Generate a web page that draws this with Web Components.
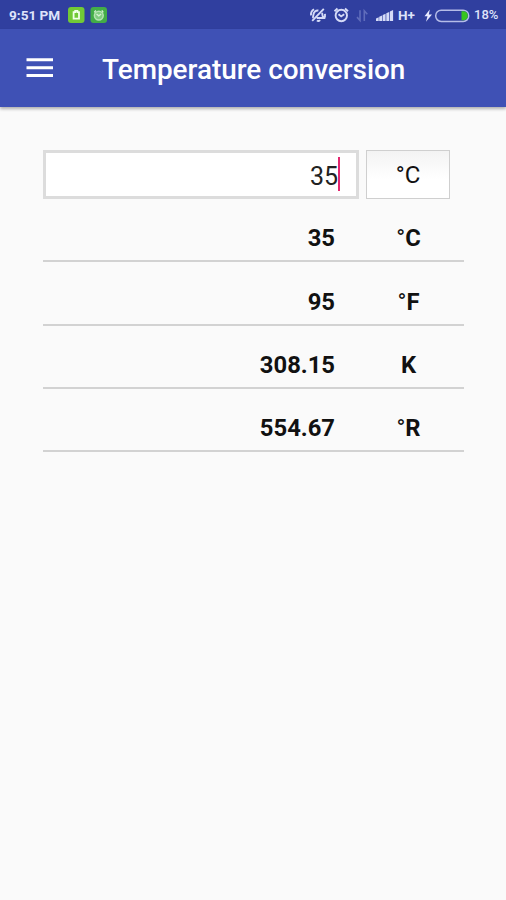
<!DOCTYPE html>
<html lang="en">
<head>
<meta charset="utf-8">
<title>Temperature conversion</title>
<style>
    body {
        margin: 0;
        background: #fafafa;
        font-family: Roboto, sans-serif;
    }
</style>
</head>
<body>
<converter-app></converter-app>

<script>
class StatusBar extends HTMLElement {
    constructor(){
        super();
        this.shadowDOM = this.attachShadow({mode:"open"});
    }

    connectedCallback(){
        this.render();
    }

    render() {
        this.shadowDOM.innerHTML = `
        <style>
        :host {
            display: flex;
            align-items: center;
            justify-content: space-between;
            box-sizing: border-box;
            height: 29px;
            padding: 1px 8px 0 9px;
            background: #303f9f;
            color: #dfe3fa;
            font-size: 14px;
            font-weight: 700;
            line-height: 16px;
        }
        .side {
            display: flex;
            align-items: center;
        }
        svg {
            display: block;
        }
        .time {
            width: 59px;
            font-size: 13.6px;
            white-space: nowrap;
        }
        .net {
            width: 25px;
            font-size: 13.5px;
        }
        .level {
            font-size: 13px;
            font-weight: 500;
            width: 24px;
            white-space: nowrap;
        }
        </style>
        <div class="side">
            <span class="time">9:51 PM</span>
            <svg width="40" height="18" viewBox="0 0 40 18">
                <rect x="0" y="1" width="16.5" height="16" rx="3" fill="#72c936"/>
                <path d="M5.6 6.2h1.6V4.8h2.2v1.4H11v6.4H5.6z" fill="none" stroke="#f1ffe8" stroke-width="1.8"/>
                <rect x="22.5" y="1" width="16.5" height="16" rx="3" fill="#43ad48"/>
                <circle cx="30.8" cy="9.6" r="4.4" fill="#80cd80" stroke="#b5e5b2" stroke-width="1.5"/>
                <path d="M26.3 6.3l1.5-2M35.3 6.3l-1.5-2M28.5 8l2.3 1.8L33.1 8" fill="none" stroke="#d5f2d1" stroke-width="1.3"/>
            </svg>
        </div>
        <div class="side">
            <svg width="89" height="18" viewBox="309 5 89 18" fill="none" stroke="#d5dbf7">
                <path d="M313.2 17c-.5-1 .1-2 .2-3.2.2-2.8 2.3-4.6 5-4.3M322 11.8c.7 1.8.1 3.7 1.5 5.2h-6.8M317 19.4c.9.9 2.4.7 3-.3M312.2 19.8l11.6-12M311 14.4c-.3-2.6.8-4.8 3-6.1M325 12.8c.3 1.7 0 3.3-1 4.6" stroke-width="1.9"/>
                <circle cx="341.3" cy="14.5" r="5.7" stroke-width="1.9"/>
                <path d="M334.5 10.3l3-2.8M348 10.3l-3-2.8M338.5 13.2l2.7 2.2 3-2.2" stroke-width="1.9"/>
                <path d="M360 9.3v10.2l-3-3.4M364.3 20V9.8l3 3.4" stroke="#606dbb" stroke-width="1.6"/>
                <path d="M376 20v-2.5l2.7-1.2V20zM379.2 20v-4.2l2.9-1.3V20zM382.7 20v-6l2.9-1.3V20zM386.3 20v-7.8l2.9-1.3V20zM389.9 20v-9.6l3.2-1.3V20z" fill="#d5dbf7" stroke="none"/>
            </svg>
            <span class="net">H+</span>
            <svg width="51" height="18" viewBox="423 5 51 18">
                <path d="M429.8 8.5l-5.3 6.7h3l-1.5 5.6 6-7.3h-3.2z" fill="#e8ebff"/>
                <rect x="435.7" y="9.2" width="33" height="11.3" rx="5.5" fill="none" stroke="#b5bce8" stroke-width="1.5"/>
                <path d="M461.5 10.3h2.5c2.4 0 3.8 2.2 3.8 4.5s-1.4 4.5-3.8 4.5h-2.5z" fill="#37c51e"/>
            </svg>
            <span class="level">18%</span>
        </div>
        `;
    }
}

class AppBar extends HTMLElement {
    constructor(){
        super();
        this.shadowDOM = this.attachShadow({mode:"open"});
    }

    connectedCallback(){
        this.render();
    }

    render() {
        this.shadowDOM.innerHTML = `
        <style>
        :host {
            display: flex;
            align-items: center;
            box-sizing: border-box;
            height: 78px;
            padding-left: 26px;
            background: #3f51b5;
            color: #fff;
            box-shadow: 0 2px 3px rgba(0, 0, 0, .3);
        }
        svg {
            display: block;
            margin-right: 49px;
        }
        h1 {
            margin: 3px 0 0;
            font-size: 27.9px;
            font-weight: 500;
            line-height: 34px;
            white-space: nowrap;
        }
        </style>
        <svg width="27" height="22" viewBox="0 0 27 22">
            <path d="M.5 2.8h27M.5 10.7h27M.5 18.6h27" stroke="#fff" stroke-width="3"/>
        </svg>
        <h1><slot></slot></h1>
        `;
    }
}

class ValueInput extends HTMLElement {
    constructor(){
        super();
        this.shadowDOM = this.attachShadow({mode:"open"});
    }

    connectedCallback(){
        this.render();
    }

    render() {
        this.shadowDOM.innerHTML = `
        <style>
        :host {
            display: flex;
            align-items: center;
            justify-content: flex-end;
            box-sizing: border-box;
            width: 316px;
            height: 49px;
            padding-right: 16px;
            border: 3px solid #dcdcdc;
            background: #fff;
            color: #222;
            font-size: 25px;
        }
        .text {
            padding-top: 3px;
        }
        .caret {
            width: 2px;
            height: 34px;
            margin-bottom: 2px;
            background: #e3276f;
        }
        </style>
        <span class="text"><slot></slot></span><span class="caret"></span>
        `;
    }
}

class UnitButton extends HTMLElement {
    constructor(){
        super();
        this.shadowDOM = this.attachShadow({mode:"open"});
    }

    connectedCallback(){
        this.render();
    }

    render() {
        this.shadowDOM.innerHTML = `
        <style>
        :host {
            display: flex;
        }
        button {
            width: 84px;
            height: 49px;
            padding: 0;
            border: 1px solid #cfcfcf;
            background: linear-gradient(#f3f3f3, #fff 60%);
            color: #111;
            font-family: inherit;
            font-size: 24px;
        }
        </style>
        <button type="button"><slot></slot></button>
        `;
    }
}

class ResultRow extends HTMLElement {
    constructor(){
        super();
        this.shadowDOM = this.attachShadow({mode:"open"});
    }

    connectedCallback(){
        this.render();
    }

    render() {
        const unit = this.getAttribute("unit").replace("°", "<span class='degree'>°</span>");
        this.shadowDOM.innerHTML = `
        <style>
        :host {
            display: grid;
            grid-template-columns: 292px 147px;
            align-items: end;
            box-sizing: border-box;
            width: 421px;
            height: 63.3px;
            padding-bottom: 8px;
            border-bottom: 2px solid #d2d2d2;
            color: #111;
            font-size: 23.8px;
            font-weight: 700;
            line-height: 28px;
        }
        .value {
            text-align: right;
        }
        .unit {
            text-align: center;
        }
        .degree {
            font-weight: 400;
        }
        </style>
        <span class="value">${this.getAttribute("value")}</span>
        <span class="unit">${unit}</span>
        `;
    }
}

class ConverterApp extends HTMLElement {
    constructor(){
        super();
        this.shadowDOM = this.attachShadow({mode:"open"});
    }

    connectedCallback(){
        this.render();
    }

    render() {
        this.shadowDOM.innerHTML = `
        <style>
        :host {
            display: block;
            box-sizing: border-box;
            height: 900px;
            overflow: hidden;
        }
        main {
            padding: 43px 42px 0 43px;
        }
        .entry {
            display: flex;
            gap: 7px;
        }
        </style>
        <status-bar></status-bar>
        <app-bar>Temperature conversion</app-bar>
        <main>
            <div class="entry">
                <value-input>35</value-input>
                <unit-button>°C</unit-button>
            </div>
            <result-row value="35" unit="°C"></result-row>
            <result-row value="95" unit="°F"></result-row>
            <result-row value="308.15" unit="K"></result-row>
            <result-row value="554.67" unit="°R"></result-row>
        </main>
        `;
    }
}

customElements.define("status-bar", StatusBar);
customElements.define("app-bar", AppBar);
customElements.define("value-input", ValueInput);
customElements.define("unit-button", UnitButton);
customElements.define("result-row", ResultRow);
customElements.define("converter-app", ConverterApp);
</script>
</body>
</html>
